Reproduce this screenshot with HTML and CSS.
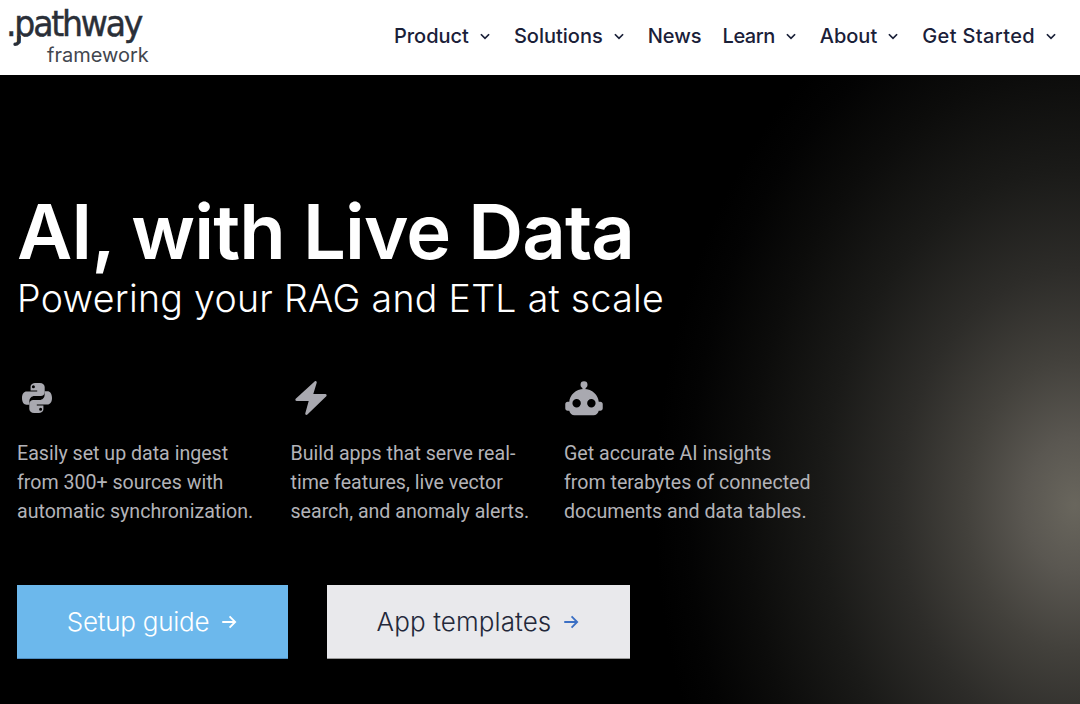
FILE: index.html
```html
<!DOCTYPE html>
<html lang="en">
<head>
<meta charset="utf-8">
<title>Pathway</title>
<link rel="stylesheet" href="styles.css">
</head>
<body>
<header class="topbar">
  <a class="logo" href="#">
    <span class="logo-word">.pathway</span>
    <svg class="logo-hook" viewBox="0 0 10 8"><path d="M8 0v2.500C8 5 7 6 5 6"/></svg>
    <span class="logo-sub">framework</span>
  </a>
  <nav class="nav">
    <a class="nav-item" href="#">Product <svg class="chev" viewBox="0 0 12 12"><path d="M2.5 4.5 6 8l3.5-3.5"/></svg></a>
    <a class="nav-item" href="#">Solutions <svg class="chev" viewBox="0 0 12 12"><path d="M2.5 4.5 6 8l3.5-3.5"/></svg></a>
    <a class="nav-item" href="#">News</a>
    <a class="nav-item nav-tight" href="#">Learn <svg class="chev" viewBox="0 0 12 12"><path d="M2.5 4.5 6 8l3.5-3.5"/></svg></a>
    <a class="nav-item" href="#">About <svg class="chev" viewBox="0 0 12 12"><path d="M2.5 4.5 6 8l3.5-3.5"/></svg></a>
    <a class="nav-item nav-wide" href="#">Get Started <svg class="chev" viewBox="0 0 12 12"><path d="M2.5 4.5 6 8l3.5-3.5"/></svg></a>
  </nav>
</header>
<main class="hero">
  <h1 class="title">AI, with Live Data</h1>
  <p class="subtitle">Powering your RAG and ETL at scale</p>
  <section class="features">
    <div class="feature">
      <svg class="icon icon-py" viewBox="0 0 32 32"><path d="M15.8 1C10.5 1 9.6 3.2 9.6 5v3.4h6.6v1.1H5.6C3 9.500 1 11.800 1 16s1.900 6.700 4.600 6.700h2.800v-3.600c0-2.700 2.300-5 5-5h6.400c2.200 0 3.900-1.800 3.900-3.900V5c0-2.200-1.900-4-4.900-4zm-3.400 2.300a1.500 1.500 0 1 1 0 3 1.500 1.500 0 0 1 0-3z"/><path d="M16.200 31c5.300 0 6.200-2.200 6.200-4v-3.400h-6.600v-1.100h10.600c2.600 0 4.600-2.300 4.600-6.500s-1.900-6.700-4.600-6.700h-2.800v3.600c0 2.700-2.300 5-5 5h-6.400c-2.200 0-3.900 1.800-3.900 3.900V27c0 2.200 1.900 4 4.900 4zm3.400-2.300a1.500 1.500 0 1 1 0-3 1.500 1.500 0 0 1 0 3z"/></svg>
      <p>Easily set up data ingest from 300+ sources with automatic synchronization.</p>
    </div>
    <div class="feature">
      <svg class="icon icon-bolt" viewBox="0 0 32 36"><path d="M19.600 1.400c1-.9 2.500 0 2.100 1.300L18.300 14h12c1.200 0 1.800 1.400 1 2.300L12.400 34.600c-1 1-2.500 0-2.100-1.300L13.700 21h-12C.5 21-.1 19.600.7 18.700z"/></svg>
      <p>Build apps that serve real-time features, live vector search, and anomaly alerts.</p>
    </div>
    <div class="feature">
      <svg class="icon icon-bot" viewBox="0 -1 38 34"><circle cx="19" cy="3.500" r="3.300"/><path fill-rule="evenodd" d="M17.500 5h3v3h-3z"/><path fill-rule="evenodd" d="M19 7.500c8 0 13.500 6 14 12h1.500c1.300 0 2.300 1 2.300 2.300v4c0 1.300-1 2.300-2.300 2.300H33c-.5 2.500-2.500 4.400-5 4.400H10c-2.500 0-4.500-1.900-5-4.400H3.500c-1.300 0-2.300-1-2.300-2.300v-4c0-1.300 1-2.300 2.300-2.300H5c.5-6 6-12 14-12zM12 17a4 4 0 1 0 0 8 4 4 0 0 0 0-8zm14 0a4 4 0 1 0 0 8 4 4 0 0 0 0-8z"/></svg>
      <p>Get accurate AI insights from terabytes of connected documents and data tables.</p>
    </div>
  </section>
  <div class="actions">
    <a class="btn btn-blue" href="#">Setup guide <svg class="arrow" viewBox="0 0 16 16"><path d="M2 8h11.500M8.500 3l5 5-5 5"/></svg></a>
    <a class="btn btn-light" href="#">App templates <svg class="arrow" viewBox="0 0 16 16"><path d="M2 8h11.500M8.500 3l5 5-5 5"/></svg></a>
  </div>
</main>
</body>
</html>
```
FILE: styles.css
```css
* { box-sizing: border-box; }
html, body { margin: 0; height: 100%; }
body { font-family: Inter, "Liberation Sans", sans-serif; background: #000; overflow: hidden; }
a { text-decoration: none; color: inherit; }

.topbar {
  height: 75px;
  background: #fff;
  display: flex;
  justify-content: space-between;
  align-items: flex-start;
  padding: 0 22px 0 6px;
}
.logo { position: relative; display: flex; flex-direction: column; color: #2a2f38; }
.logo-word {
  font-family: "DejaVu Sans", sans-serif;
  font-size: 36px;
  line-height: 36px;
  margin-top: 6px;
  letter-spacing: -2.4px;
  -webkit-text-stroke: .5px #2a2f38;
  transform: scaleX(.92);
  transform-origin: left;
}
.logo-hook {
  position: absolute;
  left: 2px;
  top: 36px;
  width: 14px;
  height: 11px;
  fill: none;
  stroke: #2a2f38;
  stroke-width: 2.4;
  stroke-linecap: round;
}
.logo-sub {
  font-family: Inter, sans-serif;
  font-size: 20px;
  line-height: 24px;
  margin: 1px 0 0 41px;
  color: #42464e;
}
.nav {
  display: flex;
  gap: 22px;
  margin-top: 21px;
  color: #1a2038;
  font-size: 20px;
  line-height: 30px;
  font-weight: 500;
}
.nav-item { display: flex; align-items: center; gap: 7px; }
.nav-tight { letter-spacing: -.5px; margin-left: -1px; }
.nav-wide { letter-spacing: .36px; }
.chev { width: 14px; height: 14px; fill: none; stroke: currentColor; stroke-width: 1.5; margin-left: 2px; }

.hero {
  height: 629px;
  padding: 113px 0 0 17px;
  color: #fff;
  background:
    radial-gradient(ellipse 420px 560px at 1075px 430px, #69665d 0, #5a5751 12%, #43413c 26%, #2d2c29 42%, #1a1a18 60%, #0c0c0b 78%, #030303 92%, #000 100%),
    #000;
}
.title { margin: 0; font-size: 76px; line-height: 86px; font-weight: 600; letter-spacing: -.95px; }
.subtitle { margin: 0; padding-top: 2px; font-size: 37.500px; line-height: 46px; font-weight: 300; letter-spacing: .3px; }
.features { display: flex; margin-top: 58px; }
.feature { width: 273.500px; }
.feature p {
  margin: 23px 0 0;
  width: 250px;
  font-family: Roboto, sans-serif;
  font-size: 19.600px;
  line-height: 29px;
  color: #b3b3b8;
}
.icon { display: block; fill: #a9a9b0; height: 36px; }
.icon-py { width: 36px; padding: 2px; margin-left: 2px; }
.icon-bolt { width: 40px; }
.icon-bot { width: 40px; }
.actions { display: flex; gap: 39px; margin-top: 59px; }
.btn {
  height: 74px;
  display: flex;
  align-items: center;
  justify-content: center;
  gap: 11px;
  font-size: 26px;
  font-weight: 300;
}
.btn-blue { width: 271px; background: #6cb8ec; color: #fff; border-bottom: 1px solid #4d8cc0; letter-spacing: -.25px; }
.btn-light { width: 303px; background: #e9e9ec; color: #23283a; border-bottom: 1px solid #9a9a9a; letter-spacing: .1px; }
.arrow { width: 18px; height: 18px; fill: none; stroke: currentColor; stroke-width: 1.6; }
.btn-light .arrow { stroke: #3b6fc4; }
```
